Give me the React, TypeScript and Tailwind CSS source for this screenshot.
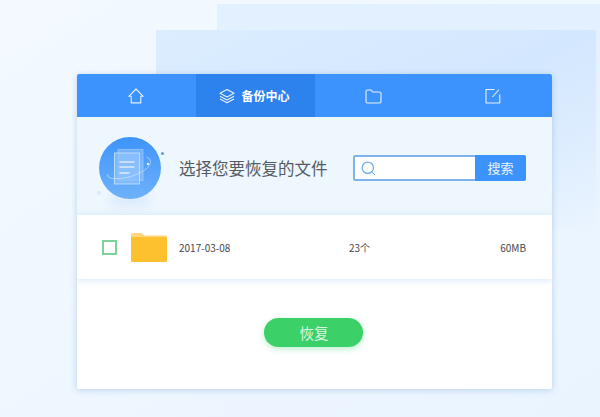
function BackupBadge() {
  return (
    <div className="relative h-[62px] w-[62px] shrink-0">
      <div className="absolute bottom-[-7px] left-[12px] h-[12px] w-[38px] rounded-full bg-[#dbeafc] blur-[4px]" />
      <div className="absolute inset-0 rounded-full bg-gradient-to-b from-[#3d94fa] to-[#6db1fb]" />
      <svg viewBox="0 0 62 62" className="absolute inset-0 h-full w-full" fill="none">
        <rect x="19" y="12.500" width="25" height="31" fill="#a9d0fd" fillOpacity="0.45" stroke="#c4dffe" strokeOpacity="0.45" />
        <rect x="15.500" y="16" width="25" height="31" fill="#8fc2fd" fillOpacity="0.7" stroke="#cde4fe" strokeOpacity="0.8" />
        <path d="M20.500 25h15M20.500 30h15M20.500 36h10" stroke="#dcecff" strokeWidth="1.300" />
        <path d="M9 37c-3 5 9 6 21 3s24-11 21-17c-.5-1.500-2-2.500-3.500-3" stroke="#d3e7ff" strokeOpacity="0.7" strokeWidth="0.900" />
        <circle cx="49" cy="27" r="1.200" fill="#e3f0ff" />
      </svg>
      <span className="absolute left-[62px] top-[15px] h-[3px] w-[3px] rounded-full bg-[#5c9be0]" />
      <span className="absolute left-[-2px] top-[54px] h-[4px] w-[4px] rounded-full bg-[#d7e9fc]" />
      <span className="absolute left-[50px] top-[-1px] h-[1px] w-[1px] rounded-full bg-[#c9dcf0]" />
    </div>
  );
}

function FolderIcon() {
  return (
    <svg viewBox="0 0 36 29" className="h-[29px] w-[36px] shrink-0">
      <path d="M0 1.500A1.500 1.500 0 0 1 1.500 0h8.500c1.500 0 2 2.500 4 2.500h20.500A1.500 1.500 0 0 1 36 4v6H0z" fill="#fdd67f" />
      <path d="M0 4h34.500A1.500 1.500 0 0 1 36 5.500v22a1.500 1.500 0 0 1-1.500 1.500h-33A1.500 1.500 0 0 1 0 27.500z" fill="#fdc02f" />
    </svg>
  );
}

function TabIcon({ d, w = 16 }: { d: string; w?: number }) {
  return (
    <svg
      viewBox={`0 0 ${w} 16`}
      width={w}
      height="16"
      fill="none"
      stroke="#e6f2ff"
      strokeWidth="1.100"
      strokeLinejoin="round"
    >
      <path d={d} />
    </svg>
  );
}

export default function App() {
  return (
    <div className="relative h-[417px] w-[600px] overflow-hidden bg-gradient-to-br from-[#f3f9ff] to-[#eaf4ff] font-['Noto_Sans_CJK_SC','Noto_Sans',sans-serif]">
      {/* stacked panels behind the card */}
      <div className="absolute left-[217px] top-[4px] h-[260px] w-[383px] bg-gradient-to-b from-[#e2f0ff] to-[#e9f4ff00]" />
      <div className="absolute left-[156px] top-[30px] h-[200px] w-[440px] bg-gradient-to-br from-[#dcedff] via-[#d3e7fe] to-[#d4e8fe00]" />

      <div className="absolute left-[77px] top-[74px] flex h-[315px] w-[475px] flex-col overflow-hidden rounded-[2px] bg-white shadow-[0_1px_6px_rgba(90,140,200,0.35)]">
        <nav className="grid h-[43px] shrink-0 grid-cols-4 bg-[#3d93fe]">
          <div className="flex items-center justify-center pr-[1px]">
            <TabIcon d="M.8 8.300 8 1l7.200 7.300h-2.400v6.600H3.200V8.300z" />
          </div>
          <div className="flex items-center justify-center gap-[7px] bg-[#2e82ee] pr-[2px]">
            <TabIcon d="M8 1.500 15 5.300 8 9 1 5.300zM1 8.200 8 12l7-3.800M1 11 8 14.800 15 11" />
            <span className="text-[12px] font-bold text-white">备份中心</span>
          </div>
          <div className="flex items-center justify-center">
            <TabIcon d="M1 3.500A1.500 1.500 0 0 1 2.500 2h3.600l1.600 2h6.800A1.500 1.500 0 0 1 16 5.500v8a1.500 1.500 0 0 1-1.500 1.500h-12A1.500 1.500 0 0 1 1 13.500z" w={17} />
          </div>
          <div className="flex items-center justify-center">
            <TabIcon d="M9.500 1.500H1v13.500h13.800V6.500M7.500 9 14 1.500" />
          </div>
        </nav>

        <section className="flex h-[98px] shrink-0 items-center bg-[#eef6fe] pl-[22px] pr-[26px] pt-[4px]">
          <BackupBadge />
          <h1 className="ml-[18px] text-[16.500px] font-normal text-[#555b64]">选择您要恢复的文件</h1>
          <div className="ml-auto flex h-[26px] w-[173px] overflow-hidden rounded-[2px]">
            <div className="flex w-[122px] items-center rounded-l-[2px] border-2 border-r-0 border-[#7fb2ec] bg-white pl-[6px]">
              <svg viewBox="0 0 15 15" width="15" height="15" fill="none" stroke="#6fb0ea">
                <circle cx="6.800" cy="6.800" r="5.700" strokeWidth="1.300" />
                <path d="m11 11 3 3" strokeWidth="1" />
              </svg>
            </div>
            <button className="flex-1 bg-[#3d93fe] text-[13px] text-[#eaf4ff]">搜索</button>
          </div>
        </section>

        <div className="z-10 flex h-[64px] shrink-0 items-center bg-white pl-[25px] pr-[26px] text-[10px] text-[#44484f] shadow-[0_1px_7px_rgba(150,190,235,0.4)]">
          <span className="h-[15px] w-[15px] shrink-0 border-2 border-[#7fd09a]" />
          <span className="ml-[14px]">
            <FolderIcon />
          </span>
          <span className="ml-[12px] w-[170px]">2017-03-08</span>
          <span>23个</span>
          <span className="ml-auto">60MB</span>
        </div>

        <div className="flex flex-1 justify-center pr-[3px] pt-[39px]">
          <button className="h-[29px] w-[99px] rounded-full bg-[#3bd168] pl-[2px] text-[14.500px] text-[#d8f6e0] shadow-[0_2px_6px_rgba(60,210,105,0.35)]">
            恢复
          </button>
        </div>
      </div>
    </div>
  );
}
